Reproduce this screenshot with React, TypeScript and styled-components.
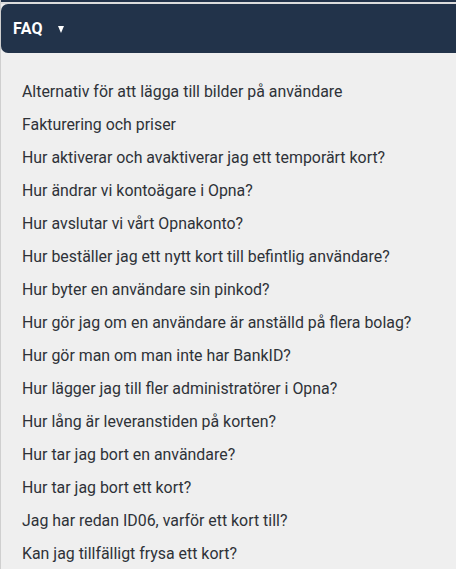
import styled, { createGlobalStyle } from 'styled-components';

const questions = [
  'Alternativ för att lägga till bilder på användare',
  'Fakturering och priser',
  'Hur aktiverar och avaktiverar jag ett temporärt kort?',
  'Hur ändrar vi kontoägare i Opna?',
  'Hur avslutar vi vårt Opnakonto?',
  'Hur beställer jag ett nytt kort till befintlig användare?',
  'Hur byter en användare sin pinkod?',
  'Hur gör jag om en användare är anställd på flera bolag?',
  'Hur gör man om man inte har BankID?',
  'Hur lägger jag till fler administratörer i Opna?',
  'Hur lång är leveranstiden på korten?',
  'Hur tar jag bort en användare?',
  'Hur tar jag bort ett kort?',
  'Jag har redan ID06, varför ett kort till?',
  'Kan jag tillfälligt frysa ett kort?',
];

const GlobalStyle = createGlobalStyle`
  html, body {
    margin: 0;
    padding: 0;
    background: #efefef;
    overflow: hidden;
  }
  body {
    font-family: Roboto, "Noto Sans", sans-serif;
  }
`;

const Page = styled.div`
  min-height: 569px;
  background: #efefef;
  border-left: 1px solid #cfcfcf;
`;

const TopStrip = styled.div`
  height: 2px;
  background: #22334a;
  border-bottom: 2px solid #dcdcdc;
`;

const Header = styled.div`
  height: 49px;
  background: #22334a;
  border-radius: 7px 0 0 7px;
  display: flex;
  align-items: center;
  padding-left: 12px;
  gap: 15px;
`;

const Title = styled.span`
  color: #ffffff;
  font-weight: 700;
  font-size: 16px;
  letter-spacing: 0.3px;
`;

const Caret = styled.span`
  width: 0;
  height: 0;
  border-left: 3.5px solid transparent;
  border-right: 3.5px solid transparent;
  border-top: 7px solid #ffffff;
  margin-top: 1px;
`;

const List = styled.ul`
  list-style: none;
  margin: 0;
  padding: 22px 0 0 21px;
`;

const Item = styled.li`
  height: 33px;
  line-height: 33px;
  font-size: 15.9px;
  color: #2e3238;
  white-space: nowrap;
`;

export default function App() {
  return (
    <>
      <GlobalStyle />
      <Page>
        <TopStrip />
        <Header>
          <Title>FAQ</Title>
          <Caret />
        </Header>
        <List>
          {questions.map((q) => (
            <Item key={q}>{q}</Item>
          ))}
        </List>
      </Page>
    </>
  );
}
